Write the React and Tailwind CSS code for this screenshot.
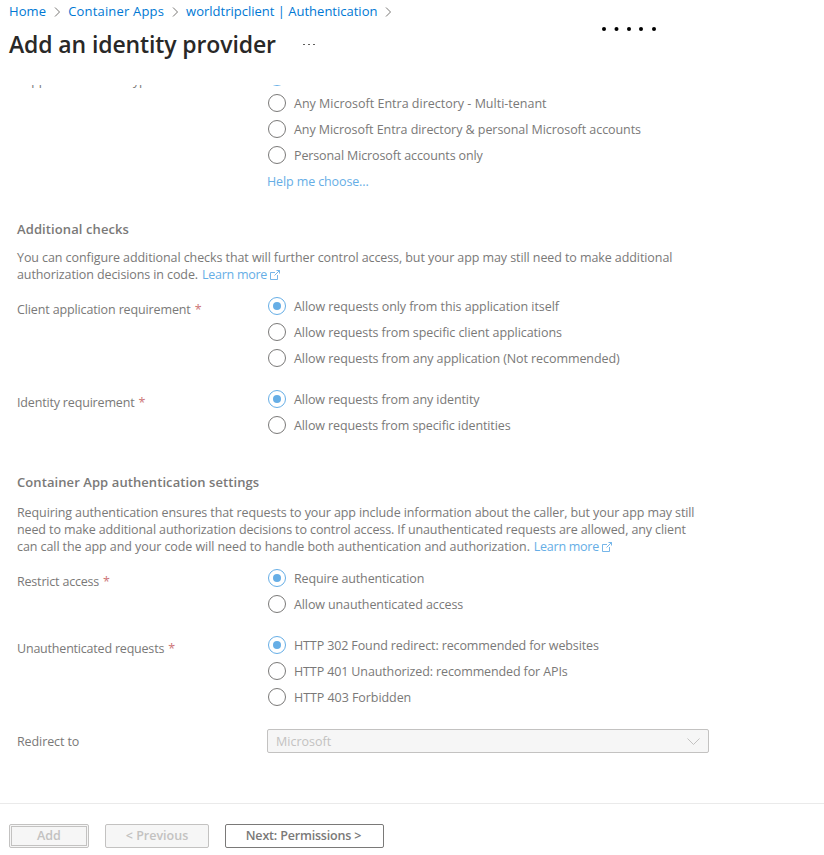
import React from "react";

function Radio({ checked }) {
  return (
    <span className={"flex h-[18px] w-[18px] shrink-0 items-center justify-center rounded-full border " + (checked ? "border-[#66aee6]" : "border-[#7a7978]")}>
      {checked && <span className="h-2 w-2 rounded-full bg-[#66aee6]" />}
    </span>
  );
}

function Options({ items, selected = 0, children }) {
  return (
    <div className="flex flex-col pl-px">
      {items.map(([label, tracking], i) => (
        <label key={label} className="flex h-[26px] items-center gap-2 whitespace-nowrap">
          <Radio checked={i === selected} />
          <span className={"pt-[2px] " + tracking}>{label}</span>
        </label>
      ))}
      {children}
    </div>
  );
}

function Field({ label, tracking, className, children }) {
  return (
    <div className={"flex " + className}>
      <div className="w-[250px] shrink-0 pt-[8px] leading-[18px] whitespace-nowrap">
        <span className={tracking}>{label}</span>
        <span className="ml-1 text-[#cd7577]">*</span>
      </div>
      {children}
    </div>
  );
}

function LearnMore() {
  return (
    <a className="ml-1 text-[#66aee6]">
      <span className="tracking-[-0.27px]">Learn more</span>
      <svg className="ml-[3px] inline-block h-[10px] w-[10px] align-[-1px]" viewBox="0 0 10 10" fill="none" stroke="currentColor" strokeWidth="0.9">
        <path d="M5 2.500H.5v7h7V5M6.500.5h3v3M9.500.5l-5 5" />
      </svg>
    </a>
  );
}

function Crumb({ children, className }) {
  return (
    <>
      <a className={className}>{children}</a>
      <svg className="mr-[7px] ml-[8px] mt-px h-[10px] w-[7px] shrink-0" viewBox="0 0 7 10" fill="none" stroke="#797775">
        <path d="M1 .5L5.500 5 1 9.500" />
      </svg>
    </>
  );
}

export default function App() {
  return (
    <div className="flex h-[855px] w-[824px] flex-col overflow-hidden bg-white font-['Open_Sans','Noto_Sans',sans-serif] text-[12.5px] text-[#7a7978]">
      <header className="flex h-[85px] shrink-0 justify-between pl-[9px]">
        <div>
          <nav className="flex h-[23px] items-center text-[13px] whitespace-nowrap text-[#0078d4]">
            <Crumb className="tracking-[0.1px]">Home</Crumb>
            <Crumb className="tracking-[0.18px]">Container Apps</Crumb>
            <Crumb className="tracking-[0px]">worldtripclient | Authentication</Crumb>
          </nav>
          <div className="flex h-[43px] items-center whitespace-nowrap text-[#292827]">
            <h1 className="text-[23px] font-semibold tracking-[-0.12px]">Add an identity provider</h1>
            <div className="ml-[27px] flex gap-[3px]">
              <i className="h-px w-[2px] bg-[#605e5c]" />
              <i className="h-px w-[2px] bg-[#605e5c]" />
              <i className="h-px w-[2px] bg-[#605e5c]" />
            </div>
          </div>
        </div>
        <svg className="mt-[27px] mr-[167px] h-[4px] w-[56px]" viewBox="0 0 56 4" fill="#000">
          <circle cx="3" cy="2" r="2" />
          <circle cx="15.5" cy="2" r="2" />
          <circle cx="28" cy="2" r="2" />
          <circle cx="40" cy="2" r="2" />
          <circle cx="53" cy="2" r="2" />
        </svg>
      </header>
      <main className="h-[718px] shrink-0 overflow-hidden pl-[17px]">
        <Field label="Supported account types" tracking="tracking-[-0.15px]" className="-mt-[21px] h-[130px]">
          <Options
            items={[
              ["Current tenant - Single tenant", ""],
              ["Any Microsoft Entra directory - Multi-tenant", "tracking-[0px]"],
              ["Any Microsoft Entra directory & personal Microsoft accounts", "tracking-[-0.06px]"],
              ["Personal Microsoft accounts only", "tracking-[-0.12px]"],
            ]}
          >
            <a className="-ml-px flex h-[26px] items-center pt-[2px] tracking-[-0.12px] text-[#66aee6]">Help me choose...</a>
          </Options>
        </Field>
        <h2 className="mt-[26px] h-[18px] text-[13px] leading-[18px] font-semibold tracking-[0.1px]">Additional checks</h2>
        <p className="mt-[11px] leading-[17px] whitespace-nowrap">
          <span className="tracking-[-0.085px]">You can configure additional checks that will further control access, but your app may still need to make additional</span>
          <br />
          <span className="tracking-[-0.1px]">authorization decisions in code.</span>
          <LearnMore />
        </p>
        <Field label="Client application requirement" tracking="tracking-[-0.13px]" className="mt-[10px]">
          <Options
            items={[
              ["Allow requests only from this application itself", "tracking-[-0.07px]"],
              ["Allow requests from specific client applications", "tracking-[-0.08px]"],
              ["Allow requests from any application (Not recommended)", "tracking-[-0.08px]"],
            ]}
          />
        </Field>
        <Field label="Identity requirement" tracking="tracking-[-0.17px]" className="mt-[15px]">
          <Options
            items={[
              ["Allow requests from any identity", "tracking-[-0.09px]"],
              ["Allow requests from specific identities", "tracking-[-0.1px]"],
            ]}
          />
        </Field>
        <h2 className="mt-[35px] h-[18px] text-[13px] leading-[18px] font-semibold tracking-[0.08px]">Container App authentication settings</h2>
        <p className="mt-[13px] leading-[17px] whitespace-nowrap">
          <span className="tracking-[-0.105px]">Requiring authentication ensures that requests to your app include information about the caller, but your app may still</span>
          <br />
          <span className="tracking-[-0.11px]">need to make additional authorization decisions to control access. If unauthenticated requests are allowed, any client</span>
          <br />
          <span className="tracking-[-0.08px]">can call the app and your code will need to handle both authentication and authorization.</span>
          <LearnMore />
        </p>
        <Field label="Restrict access" tracking="tracking-[-0.19px]" className="mt-[10px]">
          <Options
            items={[
              ["Require authentication", "tracking-[-0.14px]"],
              ["Allow unauthenticated access", "tracking-[-0.11px]"],
            ]}
          />
        </Field>
        <Field label="Unauthenticated requests" tracking="tracking-[-0.2px]" className="mt-[15px]">
          <Options
            items={[
              ["HTTP 302 Found redirect: recommended for websites", "tracking-[-0.12px]"],
              ["HTTP 401 Unauthorized: recommended for APIs", "tracking-[-0.12px]"],
              ["HTTP 403 Forbidden", "tracking-[-0.06px]"],
            ]}
          />
        </Field>
        <div className="mt-[19px] flex h-[24px] items-center">
          <span className="w-[250px] pt-[2px] tracking-[-0.1px]">Redirect to</span>
          <div className="flex h-[24px] w-[442px] items-center justify-between rounded-[2px] border border-[#c3c2c1] bg-[#f6f6f6] pr-[8px] pl-[8px] text-[#c3c2c1]">
            <span className="pt-[2px]">Microsoft</span>
            <svg className="h-[7px] w-[13px]" viewBox="0 0 13 7" fill="none" stroke="currentColor">
              <path d="M.5.5l6 6 6-6" />
            </svg>
          </div>
        </div>
      </main>
      <footer className="flex h-[52px] shrink-0 items-start gap-4 border-t border-[#eaeaea] pt-[20px] pl-[9px] font-semibold">
        <button className="h-[24px] w-[80px] rounded-[2px] border border-[#c3c2c1] bg-[#f6f6f6] p-px text-[#c3c2c1]">
          <span className="flex h-full items-center justify-center border border-[#c3c2c1]">Add</span>
        </button>
        <button className="h-[24px] w-[104px] rounded-[2px] border border-[#c3c2c1] bg-[#f6f6f6] text-[#c3c2c1]">&lt; Previous</button>
        <button className="h-[24px] w-[159px] rounded-[2px] border border-[#7a7978] bg-white pr-[2px] tracking-[-0.18px]">Next: Permissions &gt;</button>
      </footer>
    </div>
  );
}
